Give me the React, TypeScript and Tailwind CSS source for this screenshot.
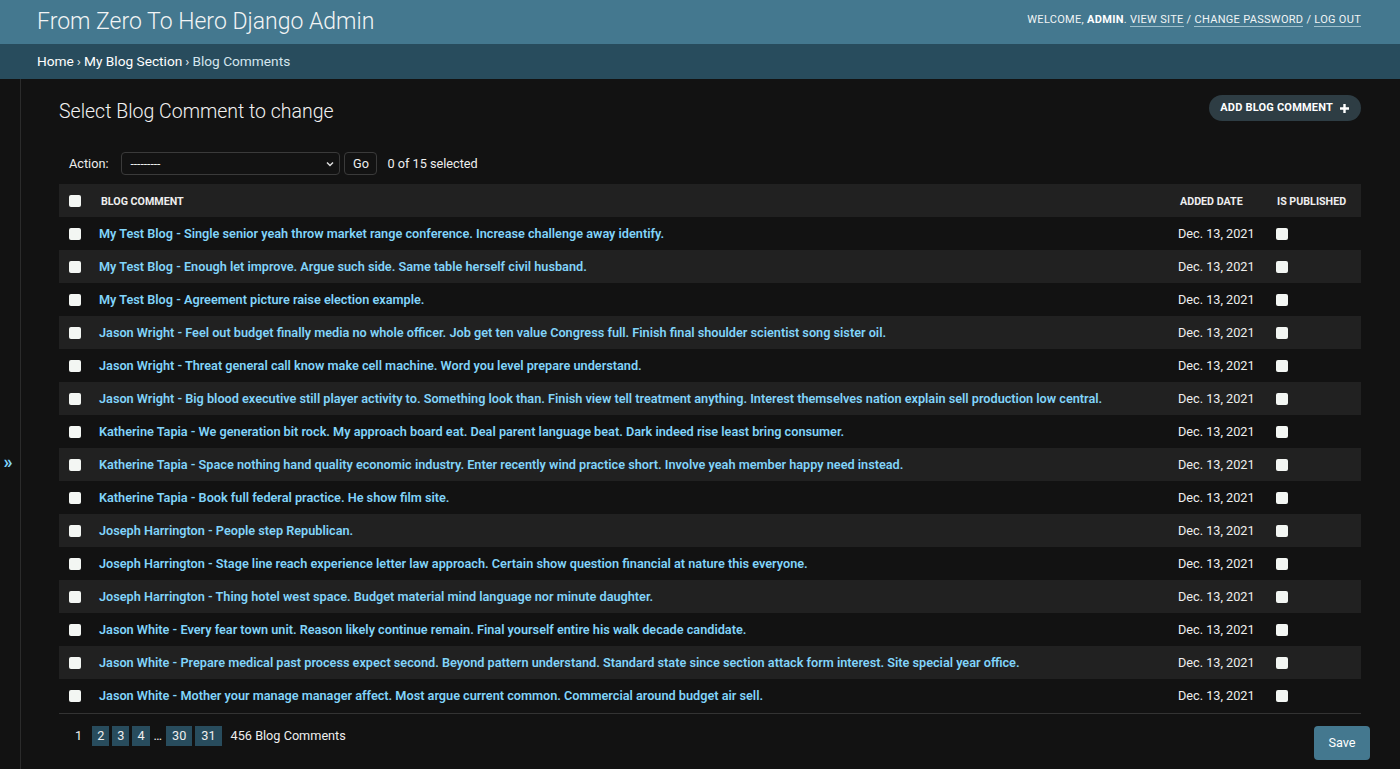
import React from "react";

const rows: [string, string][] = [
  ["My Test Blog", "Single senior yeah throw market range conference. Increase challenge away identify."],
  ["My Test Blog", "Enough let improve. Argue such side. Same table herself civil husband."],
  ["My Test Blog", "Agreement picture raise election example."],
  ["Jason Wright", "Feel out budget finally media no whole officer. Job get ten value Congress full. Finish final shoulder scientist song sister oil."],
  ["Jason Wright", "Threat general call know make cell machine. Word you level prepare understand."],
  ["Jason Wright", "Big blood executive still player activity to. Something look than. Finish view tell treatment anything. Interest themselves nation explain sell production low central."],
  ["Katherine Tapia", "We generation bit rock. My approach board eat. Deal parent language beat. Dark indeed rise least bring consumer."],
  ["Katherine Tapia", "Space nothing hand quality economic industry. Enter recently wind practice short. Involve yeah member happy need instead."],
  ["Katherine Tapia", "Book full federal practice. He show film site."],
  ["Joseph Harrington", "People step Republican."],
  ["Joseph Harrington", "Stage line reach experience letter law approach. Certain show question financial at nature this everyone."],
  ["Joseph Harrington", "Thing hotel west space. Budget material mind language nor minute daughter."],
  ["Jason White", "Every fear town unit. Reason likely continue remain. Final yourself entire his walk decade candidate."],
  ["Jason White", "Prepare medical past process expect second. Beyond pattern understand. Standard state since section attack form interest. Site special year office."],
  ["Jason White", "Mother your manage manager affect. Most argue current common. Commercial around budget air sell."],
];

const Box = () => <div className="w-[12px] h-[12px] rounded-[2px] bg-[#f3f6f3]" />;

export default function App() {
  return (
    <div
      className="w-[1400px] h-[769px] overflow-hidden bg-[#121212] text-[#eeeeee] flex flex-col"
      style={{ fontFamily: "Roboto, 'Liberation Sans', sans-serif" }}
    >
      <header className="h-[44px] bg-[#44788f] flex items-center justify-between pl-[37px] pr-[39px] shrink-0">
        <div className="text-[23px] font-light text-[#f2f4f5] leading-none -mt-[2px]">From Zero To Hero Django Admin</div>
        <div className="text-[11px] uppercase tracking-[0.3px] text-[#f0f4f5] -mt-[3px]">
          Welcome, <b className="font-bold text-white">admin</b>.{" "}
          <span className="border-b border-[#9dbfcc]">View site</span> /{" "}
          <span className="border-b border-[#9dbfcc]">Change password</span> /{" "}
          <span className="border-b border-[#9dbfcc]">Log out</span>
        </div>
      </header>
      <div className="h-[35px] bg-[#284c5d] flex items-center pl-[37px] text-[13.7px] shrink-0">
        <span className="text-white">Home</span>
        <span className="mx-[3px] text-[#e5eef2]">›</span>
        <span className="text-white">My Blog Section</span>
        <span className="mx-[3px] text-[#e5eef2]">›</span>
        <span className="text-[#d4e6ee]">Blog Comments</span>
      </div>
      <div className="flex flex-1 min-h-0">
        <div className="w-[21px] border-r border-[#2b2b2b] flex items-center justify-center shrink-0">
          <span className="text-[#81d4fa] text-[18px] font-bold leading-none -ml-[4px] mt-[76px]">»</span>
        </div>
        <main className="flex-1 pl-[38px] pr-[39px] pt-[16px] relative">
          <div className="flex items-center justify-between h-[30px]">
            <h1 className="text-[19.5px] font-light text-[#f2f2f2] mt-[3px]">Select Blog Comment to change</h1>
            <button className="h-[26px] -mt-[4px] rounded-full bg-[#2e3d44] px-[11px] flex items-center gap-[6px] text-[11px] font-bold uppercase tracking-[0.2px] text-white">
              Add blog comment
              <svg width="11" height="11" viewBox="0 0 11 11">
                <path d="M5.5 1v9M1 5.5h9" stroke="white" strokeWidth="2.4" />
              </svg>
            </button>
          </div>
          <div className="flex items-center h-[25px] mt-[26px] pl-[10px] text-[12.7px]">
            <span className="text-[#eeeeee]">Action:</span>
            <div className="ml-[13px] w-[219px] h-[23px] border border-[#3a3a3a] rounded-[4px] flex items-center justify-between pl-[8px] pr-[4px]">
              <span className="text-[12px] leading-none">---------</span>
              <svg width="10" height="10" viewBox="0 0 10 10">
                <path d="M2 3.5l3 3 3-3" stroke="#ddd" strokeWidth="1.5" fill="none" />
              </svg>
            </div>
            <div className="ml-[4px] w-[33px] h-[23px] border border-[#3a3a3a] rounded-[4px] flex items-center justify-center">Go</div>
            <span className="ml-[10px]">0 of 15 selected</span>
          </div>
          <table className="w-full mt-[8px] border-collapse text-[12.7px] table-fixed">
            <colgroup>
              <col className="w-[32px]" />
              <col />
              <col className="w-[98px]" />
              <col className="w-[93px]" />
            </colgroup>
            <thead>
              <tr className="h-[33px] bg-[#212121] text-[10.7px] font-bold uppercase text-[#eeeeee]">
                <th className="pl-[10px] text-left"><Box /></th>
                <th className="pl-[10px] text-left pt-[3px]">Blog comment</th>
                <th className="pl-[10px] text-left pt-[3px]">Added date</th>
                <th className="pl-[9px] text-left pt-[3px]">Is published</th>
              </tr>
            </thead>
            <tbody>
              {rows.map(([a, b], i) => (
                <tr key={i} className={`h-[33px] ${i % 2 === 1 ? "bg-[#212121]" : ""}`}>
                  <td className="pl-[10px]"><Box /></td>
                  <td className="pl-[8px] font-semibold text-[#81d4fa] whitespace-nowrap overflow-hidden">{a} - {b}</td>
                  <td className="pl-[8px] whitespace-nowrap">Dec. 13, 2021</td>
                  <td className="pl-[8px]"><Box /></td>
                </tr>
              ))}
            </tbody>
          </table>
          <div className="border-t border-[#333] mt-[1px]" />
          <div className="flex items-center justify-between h-[44px] pl-[16px]">
            <div className="flex items-center text-[12.7px] gap-[3px]">
              <span className="mr-[7px]">1</span>
              <span className="bg-[#284c5d] px-[5px] h-[20px] flex items-center">2</span>
              <span className="bg-[#284c5d] px-[5px] h-[20px] flex items-center">3</span>
              <span className="bg-[#284c5d] px-[5px] h-[20px] flex items-center">4</span>
              <span className="px-[1px]">…</span>
              <span className="bg-[#284c5d] px-[6px] h-[20px] flex items-center">30</span>
              <span className="bg-[#284c5d] px-[6px] h-[20px] flex items-center">31</span>
              <span className="ml-[6px]">456 Blog Comments</span>
            </div>
            <button className="mr-[-9px] mt-[14px] w-[56px] h-[34px] rounded-[4px] bg-[#44788f] text-[12.7px] text-white">Save</button>
          </div>
        </main>
      </div>
    </div>
  );
}
